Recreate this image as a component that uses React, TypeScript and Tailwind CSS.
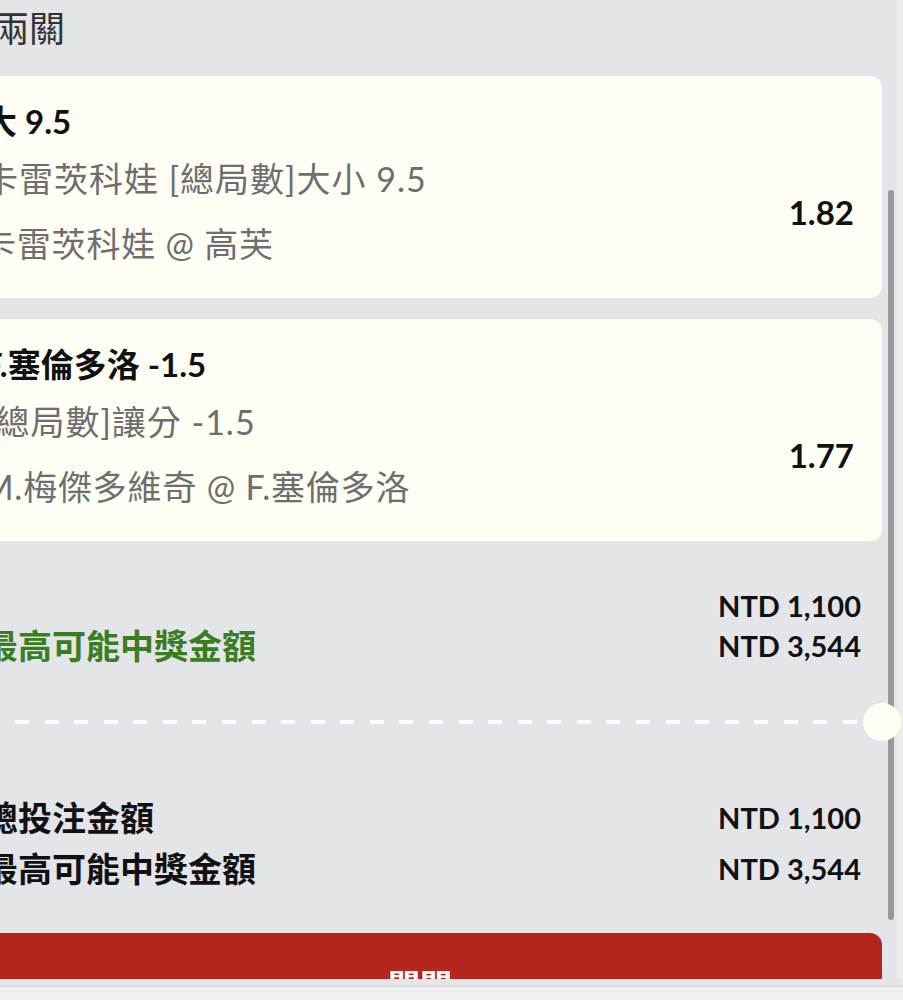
import React from "react";

function Card({ title, line2, line3, odds }: { title: string; line2: string; line3: string; odds: string }) {
  return (
    <div className="rounded-[12px] bg-[#fffef5] pl-[26px] pr-[28px] pt-[20px] pb-[29px]">
      <div className="h-[50px] leading-[50px] text-[33px] font-bold text-[#111] whitespace-nowrap">{title}</div>
      <div className="mt-[8px] flex items-center justify-between">
        <div className="flex flex-col">
          <div className="h-[50px] leading-[50px] text-[34px] tracking-[1px] text-[#6e6e6e] whitespace-nowrap">{line2}</div>
          <div className="mt-[15px] h-[50px] leading-[50px] text-[34px] tracking-[0.8px] text-[#6e6e6e] whitespace-nowrap ml-[-2px]">{line3}</div>
        </div>
        <div className="text-[33px] font-bold text-[#111] leading-[40px]">{odds}</div>
      </div>
    </div>
  );
}

export default function App() {
  return (
    <div className="w-[903px] h-[1000px] overflow-hidden bg-[#e4e5e8] font-['Lato','Noto_Sans_CJK_TC',sans-serif] flex flex-col">
      <div className="h-[979px] flex relative overflow-hidden shrink-0">
        <div className="flex-1 relative">
          <div className="ml-[-42px] w-[924px]">
            <div className="mt-[3px] h-[50px] pl-[35px] text-[36px] leading-[50px] text-[#333] whitespace-nowrap">兩關</div>
            <div className="mt-[23px] flex flex-col gap-[21px]">
              <Card title="大 9.5" line2="卡雷茨科娃 [總局數]大小 9.5" line3="卡雷茨科娃 @ 高芙" odds="1.82" />
              <Card title="F.塞倫多洛 -1.5" line2="[總局數]讓分 -1.5" line3="M.梅傑多維奇 @ F.塞倫多洛" odds="1.77" />
            </div>
            <div className="mt-[45px] flex items-end justify-between pl-[26px] pr-[21px]">
              <div className="text-[34px] font-bold leading-[40px] text-[#3a7d22] whitespace-nowrap">最高可能中獎金額</div>
              <div className="flex flex-col items-end text-[29px] font-bold leading-[40px] text-[#111]">
                <div>NTD 1,100</div>
                <div>NTD 3,544</div>
              </div>
            </div>
            <div className="relative mt-[54px] h-[4px]">
              <div className="ml-[57px] w-[843px] h-full bg-[repeating-linear-gradient(90deg,#fffef5_0px,#fffef5_14px,transparent_14px,transparent_29.57px)]" />
              <div className="absolute left-[905px] top-[-17px] w-[38px] h-[38px] rounded-full bg-[#fffef2] z-10" />
            </div>
            <div className="mt-[68px] pl-[26px] pr-[21px] text-[#111] font-bold">
              <div className="h-[51px] flex items-center justify-between">
                <span className="text-[34px] whitespace-nowrap">總投注金額</span>
                <span className="text-[29px]">NTD 1,100</span>
              </div>
              <div className="h-[51px] flex items-center justify-between">
                <span className="text-[34px] whitespace-nowrap">最高可能中獎金額</span>
                <span className="text-[29px]">NTD 3,544</span>
              </div>
            </div>
            <div className="mt-[39px] h-[104px] rounded-[12px] bg-gradient-to-b from-[#b3241b] via-[#b5261d] to-[#c23a30] flex items-center justify-center text-white text-[32px] font-bold">
              關閉
            </div>
          </div>
          <div className="absolute left-[888px] top-[190px] w-[6px] h-[730px] rounded-full bg-[#98989c]" />
        </div>
        <div className="w-[6px] bg-[#ececef]" />
      </div>
      <div className="h-[7px] bg-[#e6e6e8] shrink-0" />
      <div className="flex-1 border-t border-[#d8d8da] bg-[#f0f0f1]" />
    </div>
  );
}
